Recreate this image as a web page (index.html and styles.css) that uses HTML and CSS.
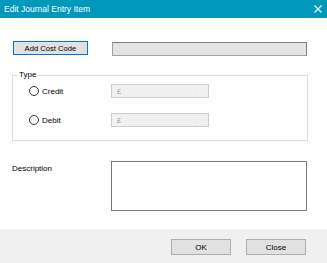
FILE: index.html
```html
<!DOCTYPE html>
<html lang="en">
<head>
    <meta charset="UTF-8">
    <title>Edit Journal Entry Item</title>
    <link rel="stylesheet" href="styles.css">
</head>
<body>
    <div class="window">
        <div class="titlebar">
            <span class="title">Edit Journal Entry Item</span>
            <svg class="close-x" width="8" height="8" viewBox="0 0 8 8">
                <path d="M0.5 0.5 L7.5 7.5 M7.5 0.5 L0.5 7.5" stroke="#ffffff" stroke-width="1.1" fill="none"/>
            </svg>
        </div>

        <div class="content">
            <div class="cost-row">
                <button class="btn btn-add">Add Cost Code</button>
                <div class="cost-field"></div>
            </div>

            <fieldset class="type-group">
                <legend>Type</legend>
                <div class="option">
                    <label class="choice"><span class="radio"></span>Credit</label>
                    <div class="amount"><span class="pound">£</span><span class="dot">.</span></div>
                </div>
                <div class="option">
                    <label class="choice"><span class="radio"></span>Debit</label>
                    <div class="amount"><span class="pound">£</span><span class="dot">.</span></div>
                </div>
            </fieldset>

            <div class="desc-row">
                <label class="desc-label">Description</label>
                <textarea class="desc-box"></textarea>
            </div>
        </div>

        <div class="footer">
            <button class="btn btn-foot">OK</button>
            <button class="btn btn-foot">Close</button>
        </div>
    </div>
</body>
</html>
```

FILE: styles.css
```css
* {
    margin: 0;
    padding: 0;
    box-sizing: border-box;
}

body {
    font-family: 'Liberation Sans', Arial, sans-serif;
    font-size: 8px;
    color: #000000;
    background: #ffffff;
}

.window {
    width: 327px;
    height: 263px;
    display: flex;
    flex-direction: column;
}

.titlebar {
    height: 18px;
    background: #0099bc;
    color: #ffffff;
    display: flex;
    align-items: center;
    justify-content: space-between;
    padding: 0 5px 1px 4px;
    font-size: 8.5px;
}

.close-x {
    margin-top: 1px;
}

.content {
    flex: 1;
    padding: 23px 20px 0 12px;
    background: #ffffff;
}

.cost-row {
    display: flex;
    align-items: flex-start;
}

.btn {
    font-family: 'Liberation Sans', Arial, sans-serif;
    font-size: 7.6px;
    color: #000000;
    background: #e1e1e1;
    border: 1px solid #adadad;
}

.btn-add {
    margin-left: 1px;
    width: 75px;
    height: 14px;
    border-color: #0078d7;
}

.cost-field {
    margin-left: 24px;
    margin-top: 1px;
    width: 196px;
    height: 14px;
    background: #e3e3e3;
    border: 1px solid #a0a0a0;
    border-top-color: #7f7f7f;
    border-right-color: #7f7f7f;
}

.type-group {
    margin-top: 14px;
    width: 296px;
    border: 1px solid #dcdcdc;
    padding: 4px 0 13px 5px;
    min-width: 0;
}

.type-group legend {
    padding: 0 1px;
    line-height: 10px;
}

.option {
    display: flex;
    align-items: center;
    height: 14px;
}

.option + .option {
    margin-top: 15px;
}

.choice {
    width: 93px;
    padding-left: 11px;
    display: flex;
    align-items: center;
}

.radio {
    width: 10px;
    height: 10px;
    border: 1px solid #333333;
    border-radius: 50%;
    background: #ffffff;
    margin-right: 3px;
}

.amount {
    width: 98px;
    height: 14px;
    background: #f0f0f0;
    border: 1px solid #cccccc;
    display: flex;
    align-items: center;
    justify-content: space-between;
    padding: 0 11px 0 5px;
    color: #a0a0a0;
    font-size: 7.5px;
}

.dot {
    font-size: 6px;
}

.desc-row {
    margin-top: 20px;
    display: flex;
    align-items: flex-start;
}

.desc-label {
    width: 99px;
    padding-top: 3px;
}

.desc-box {
    width: 196px;
    height: 50px;
    border: 1px solid #7a7a7a;
    background: #ffffff;
    resize: none;
    outline: none;
}

.footer {
    height: 34px;
    background: #f0f0f0;
    display: flex;
    justify-content: flex-end;
    align-items: flex-start;
    gap: 15px;
    padding: 10px 21px 0 0;
}

.btn-foot {
    width: 60px;
    height: 16px;
    font-size: 8px;
}
```
